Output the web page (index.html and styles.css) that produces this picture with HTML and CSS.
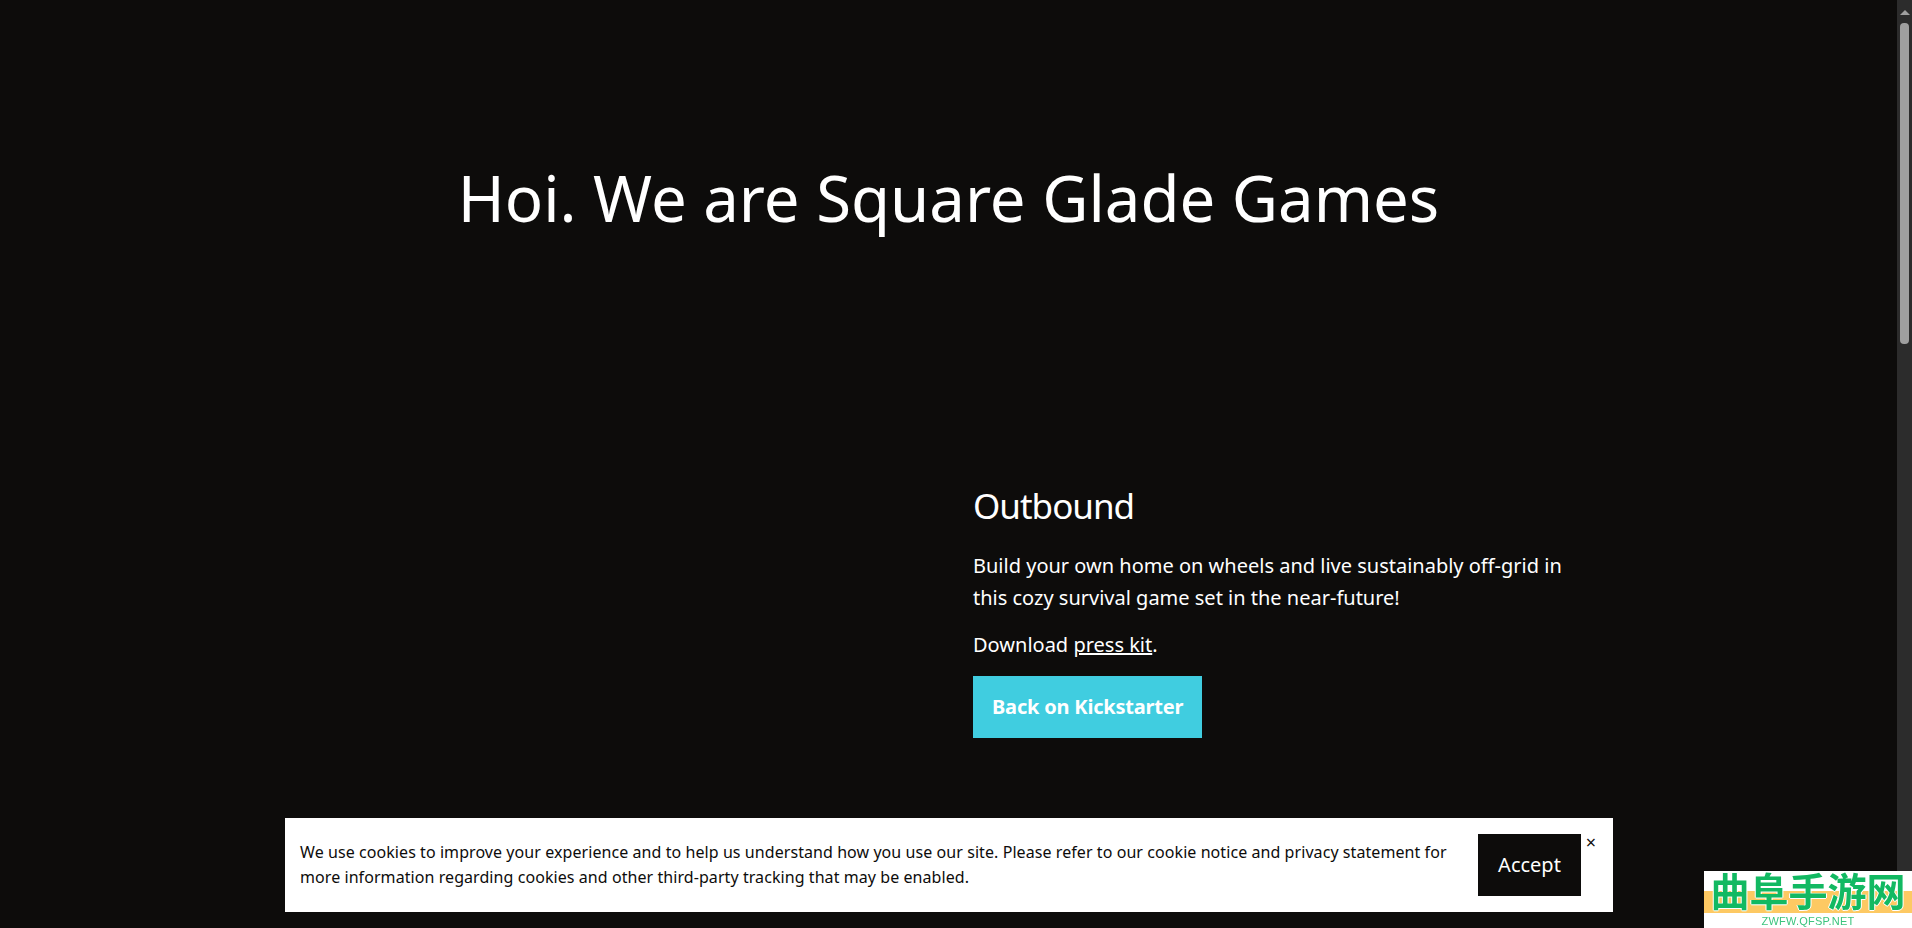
FILE: index.html
```html
<!DOCTYPE html>
<html>
<head>
  <meta name="viewport" content="width=device-width, initial-scale=1">
  <title>Square Glade Games</title>
  <link rel="stylesheet" href="styles.css">
</head>
<body>

  <div class="page">
    <main class="content">
      <h1 class="hero">Hoi. We are Square Glade Games</h1>

      <section class="game">
        <div class="gameMedia"></div>
        <div class="gameText">
          <h2>Outbound</h2>
          <p>Build your own home on wheels and live sustainably off-grid in this cozy survival game set in the near-future!</p>
          <p>Download <a href="#">press kit</a>.</p>
          <a class="backButton" href="#">Back on Kickstarter</a>
        </div>
      </section>
    </main>

    <div class="scrollbar">
      <span class="scrollArrow"></span>
      <span class="scrollThumb"></span>
    </div>
  </div>

  <div class="cookieBar">
    <p class="cookieText">We use cookies to improve your experience and to help us understand how you use our site. Please refer to our cookie notice and privacy statement for more information regarding cookies and other third-party tracking that may be enabled.</p>
    <button class="acceptButton" type="button">Accept</button>
    <button class="closeButton" type="button">×</button>
  </div>

  <div class="siteBadge">
    <div class="badgeBand"><span class="badgeName">曲阜手游网</span></div>
    <div class="badgeUrl">ZWFW.QFSP.NET</div>
  </div>

</body>
</html>
```

FILE: styles.css
```css
html, body {
  margin: 0;
  height: 100%;
  overflow: hidden;
  background-color: #0d0c0b;
}

body {
  font-family: "Noto Sans", "Lato", sans-serif;
  color: #fff;
}

.page {
  display: flex;
  height: 928px;
}

.content {
  flex: 1;
  min-width: 0;
}

.hero {
  margin: 0;
  padding-top: 160px;
  font-size: 63.5px;
  font-weight: 400;
  line-height: 76px;
  text-align: center;
}

.game {
  display: flex;
  padding-top: 248px;
}

.gameMedia {
  width: 973px;
  flex: none;
}

.gameText {
  width: 610px;
  font-size: 20px;
  line-height: 32px;
}

.gameText h2 {
  margin: 0 0 22px;
  font-size: 35px;
  font-weight: 400;
  line-height: 44px;
  letter-spacing: -1px;
}

.gameText p {
  margin: 0 0 15px;
}

.gameText a {
  color: #fff;
}

.gameText .backButton {
  display: inline-block;
  padding: 15px 19px;
  background-color: #40cde0;
  font-weight: 700;
  letter-spacing: -0.2px;
  text-decoration: none;
}

.scrollbar {
  width: 15px;
  flex: none;
  background-color: #2c2c2c;
  display: flex;
  flex-direction: column;
  align-items: center;
}

.scrollArrow {
  margin-top: 10px;
  border-left: 5px solid transparent;
  border-right: 5px solid transparent;
  border-bottom: 5px solid #9f9f9f;
}

.scrollThumb {
  width: 9px;
  height: 321px;
  margin-top: 8px;
  border-radius: 4px;
  background-color: #9f9f9f;
}

.cookieBar {
  position: fixed;
  left: 285px;
  top: 818px;
  width: 1328px;
  height: 94px;
  box-sizing: border-box;
  display: flex;
  align-items: center;
  padding: 0 32px 0 15px;
  background-color: #fff;
  color: #0d0c0b;
}

.cookieText {
  margin: 0;
  width: 1178px;
  flex: none;
  font-size: 16px;
  line-height: 25px;
  letter-spacing: 0.07px;
}

.acceptButton {
  width: 103px;
  height: 62px;
  flex: none;
  padding: 0 0 2px;
  border: 0;
  background-color: #0d0c0b;
  color: #fff;
  font-family: inherit;
  font-size: 20px;
}

.closeButton {
  position: absolute;
  right: 17px;
  top: 15px;
  padding: 0;
  border: 0;
  background: none;
  color: #0d0c0b;
  font-family: inherit;
  font-size: 18px;
  line-height: 18px;
}

.siteBadge {
  position: fixed;
  left: 1704px;
  top: 871px;
  width: 208px;
  height: 57px;
  background-color: #fff;
  color: #12b962;
}

.badgeBand {
  height: 43px;
  background: linear-gradient(#fff 0, #fff 20px, #fdc963 20px, #fdc963 42px, #fff 42px);
}

.badgeName {
  display: block;
  font-family: "Noto Sans CJK SC", sans-serif;
  font-size: 39px;
  font-weight: 700;
  line-height: 37px;
  text-align: center;
  text-shadow: 1px 0 #fff, -1px 0 #fff, 0 1px #fff;
}

.badgeUrl {
  font-family: "Liberation Sans", sans-serif;
  font-size: 11px;
  line-height: 14px;
  text-align: center;
  letter-spacing: 0.2px;
  color: #3cc47e;
}
```
